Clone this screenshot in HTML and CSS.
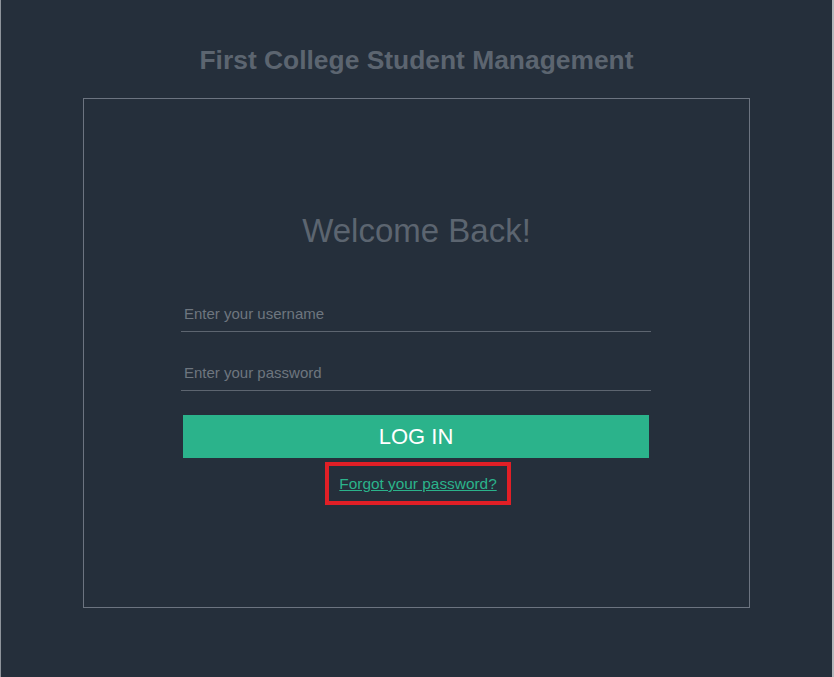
FILE: index.html
```html
<!DOCTYPE html>
<html lang="en">
<head>
<meta charset="utf-8">
<title>First College Student Management</title>
<link rel="stylesheet" href="styles.css">
</head>
<body>
<div class="page">
  <h1 class="title">First College Student Management</h1>
  <div class="card">
    <h2 class="welcome">Welcome Back!</h2>
    <form class="form">
      <input class="field" type="text" placeholder="Enter your username">
      <input class="field" type="password" placeholder="Enter your password">
      <button class="btn" type="button">LOG IN</button>
      <a class="forgot" href="#">Forgot your password?</a>
    </form>
  </div>
</div>
</body>
</html>
```
FILE: styles.css
```css
html, body {
  margin: 0;
  padding: 0;
  height: 100%;
}
body {
  background: #252f3b;
  font-family: "Liberation Sans", Arial, sans-serif;
  border-left: 1px solid #8e949b;
  border-right: 2px solid #b4b8bc;
  box-sizing: border-box;
  overflow: hidden;
}
.page {
  padding-top: 43px;
  display: flex;
  flex-direction: column;
  align-items: center;
}
.title {
  margin: 0;
  font-size: 26.4px;
  line-height: 34px;
  font-weight: bold;
  color: #5c6570;
}
.card {
  margin-top: 21px;
  width: 667px;
  height: 510px;
  border: 1px solid #6c7480;
  display: flex;
  flex-direction: column;
  align-items: center;
  padding-top: 112px;
  box-sizing: border-box;
}
.welcome {
  margin: 0;
  font-size: 33px;
  line-height: 40px;
  font-weight: normal;
  color: #5c6570;
}
.form {
  margin-top: 45px;
  margin-right: 1px;
  width: 470px;
  display: flex;
  flex-direction: column;
  align-items: center;
}
.field {
  width: 470px;
  height: 36px;
  box-sizing: border-box;
  background: transparent;
  border: none;
  border-bottom: 1px solid #5d6570;
  padding: 0 3px 1px 3px;
  margin: 0 0 23px 0;
  font-family: "Liberation Sans", Arial, sans-serif;
  font-size: 15px;
  color: #c8ccd0;
  outline: none;
}
.field::placeholder {
  color: #6e767f;
}
.btn {
  width: 466px;
  height: 43px;
  border: none;
  background: #2bb38b;
  color: #ffffff;
  font-family: "Liberation Sans", Arial, sans-serif;
  font-size: 22px;
  padding: 0;
  margin: 1px 0 0 0;
  cursor: pointer;
}
.forgot {
  margin-top: 4px;
  margin-left: 4px;
  display: inline-block;
  border: 4px solid #e11f26;
  padding: 9px 10px 9px 10px;
  font-size: 15.4px;
  line-height: 17px;
  color: #2bb38b;
  text-decoration: underline;
}
```
